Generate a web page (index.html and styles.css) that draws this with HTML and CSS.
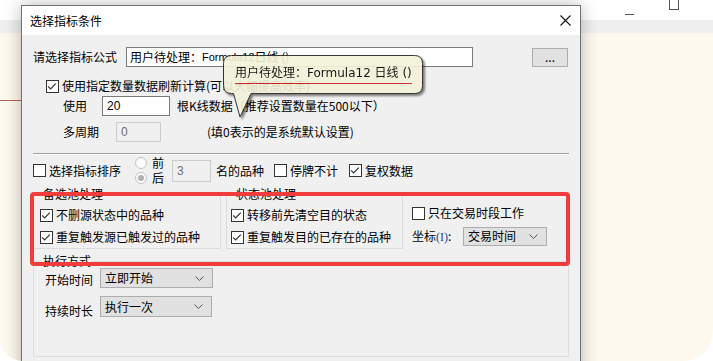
FILE: index.html
```html
<!DOCTYPE html>
<html lang="zh">
<head>
<meta charset="utf-8">
<title>选择指标条件</title>
<link rel="stylesheet" href="styles.css">
</head>
<body>
<div class="desk">
  <div class="bgwin">
    <div class="bg-title"><span class="bg-min"></span><span class="bg-max"></span></div>
    <div class="bg-tool"></div>
    <div class="bg-content"><div class="bg-line"></div></div>
  </div>

  <div class="dialog">
    <div class="titlebar">
      <span class="title">选择指标条件</span>
      <svg class="close" width="11" height="11" viewBox="0 0 11 11"><path d="M0.5 0.5 L10.5 10.5 M10.5 0.5 L0.5 10.5" stroke="#111" stroke-width="1.1" fill="none"/></svg>
    </div>
    <div class="body">
      <div class="row r-formula">
        <span class="lbl w93">请选择指标公式</span>
        <div class="input formula">用户待处理：<span class="lat">Formula12</span> 日线 ()</div>
        <div class="btn">...</div>
      </div>

      <div class="row r-check">
        <span class="cb on"><svg viewBox="0 0 13 13"><path d="M2.3 6.3 L5 9 L10.6 3.4"/></svg></span>
        <span class="cbl">使用指定数量数据刷新计算(可以大幅提高效率)</span>
      </div>

      <div class="row r-use">
        <span class="lbl w39">使用</span>
        <div class="input num w68">20</div>
        <span class="after7">根K线数据（推荐设置数量在500以下）</span>
      </div>

      <div class="row r-multi">
        <span class="lbl w53">多周期</span>
        <div class="input num dis w45">0</div>
        <span class="after46">(填0表示的是系统默认设置)</span>
      </div>

      <div class="sep"></div>

      <div class="row r-sort">
        <span class="cb"></span>
        <span class="cbl">选择指标排序</span>
        <div class="radios">
          <div class="radio-row"><span class="rd"></span><span class="rl">前</span></div>
          <div class="radio-row"><span class="rd sel"></span><span class="rl">后</span></div>
        </div>
        <div class="input num dis w39 h22">3</div>
        <span class="ml5">名的品种</span>
        <span class="cb ml10"></span>
        <span class="cbl">停牌不计</span>
        <span class="cb on ml11"><svg viewBox="0 0 13 13"><path d="M2.3 6.3 L5 9 L10.6 3.4"/></svg></span>
        <span class="cbl">复权数据</span>
      </div>

      <div class="groups">
        <fieldset class="grp g1">
          <legend>备选池处理</legend>
          <div class="row grow first">
            <span class="cb on"><svg viewBox="0 0 13 13"><path d="M2.3 6.3 L5 9 L10.6 3.4"/></svg></span>
            <span class="cbl">不删源状态中的品种</span>
          </div>
          <div class="row grow">
            <span class="cb on"><svg viewBox="0 0 13 13"><path d="M2.3 6.3 L5 9 L10.6 3.4"/></svg></span>
            <span class="cbl">重复触发源已触发过的品种</span>
          </div>
        </fieldset>
        <fieldset class="grp g2">
          <legend>状态池处理</legend>
          <div class="row grow first">
            <span class="cb on"><svg viewBox="0 0 13 13"><path d="M2.3 6.3 L5 9 L10.6 3.4"/></svg></span>
            <span class="cbl">转移前先清空目的状态</span>
          </div>
          <div class="row grow">
            <span class="cb on"><svg viewBox="0 0 13 13"><path d="M2.3 6.3 L5 9 L10.6 3.4"/></svg></span>
            <span class="cbl">重复触发目的已存在的品种</span>
          </div>
        </fieldset>
        <div class="g3">
          <div class="row g3-top">
            <span class="cb"></span>
            <span class="cbl">只在交易时段工作</span>
          </div>
          <div class="row g3-bot">
            <span class="coord">坐标<span class="acc">(I)</span>:</span>
            <div class="combo w84">交易时间<svg class="chev" width="9" height="5" viewBox="0 0 9 5"><path d="M0.5 0.5 L4.5 4.5 L8.5 0.5"/></svg></div>
          </div>
        </div>
      </div>

      <fieldset class="grp exec">
        <legend>执行方式</legend>
        <div class="row erow first">
          <span class="lbl w55 lo">开始时间</span>
          <div class="combo w113">立即开始<svg class="chev" width="9" height="5" viewBox="0 0 9 5"><path d="M0.5 0.5 L4.5 4.5 L8.5 0.5"/></svg></div>
        </div>
        <div class="row erow second">
          <span class="lbl w55 lo2">持续时长</span>
          <div class="combo w112">执行一次<svg class="chev" width="9" height="5" viewBox="0 0 9 5"><path d="M0.5 0.5 L4.5 4.5 L8.5 0.5"/></svg></div>
        </div>
      </fieldset>
    </div>
  </div>

  <div class="hl"></div>

  <div class="tip">
    <svg class="tip-bg" width="206" height="68" viewBox="0 0 206 68">
      <path d="M8.5 0.5 H191.5 Q199.5 0.5 199.5 8.5 V30.5 Q199.5 38.5 191.5 38.5 H28 L17 62 L10.5 38.5 H8.5 Q0.5 38.5 0.5 30.5 V8.5 Q0.5 0.5 8.5 0.5 Z" fill="#f3f2d9" stroke="#222" stroke-width="1"/>
    </svg>
    <div class="tip-text">用户待处理：Formula12 日线 ()</div>
    <div class="tip-line"></div>
  </div>
</div>
</body>
</html>
```

FILE: styles.css
```css
* { box-sizing: border-box; }
html, body { margin: 0; padding: 0; }
body {
  background: #fff;
  font-family: "Noto Sans CJK SC", sans-serif;
  font-size: 12px;
  color: #000;
}
.desk {
  position: relative;
  width: 713px;
  height: 361px;
  overflow: hidden;
  border-radius: 0 0 30px 22px;
}
.bgwin {
  height: 100%;
  background: #fef9ee;
  display: flex;
  flex-direction: column;
}
.bg-title {
  height: 20px;
  background: #fff;
  display: flex;
  justify-content: flex-end;
  align-items: flex-start;
}
.bg-min {
  width: 9px;
  height: 1px;
  background: #555;
  margin-top: 14px;
  margin-right: 35px;
}
.bg-max {
  width: 10px;
  height: 10px;
  border: 1px solid #555;
  border-top: none;
  margin-right: 34px;
}
.bg-tool { height: 13px; background: #efefef; }
.bg-content { flex: 1; }
.bg-line { margin-top: 67px; height: 1px; width: 40px; background: #b36060; }

/* dialog */
.dialog {
  position: absolute;
  left: 21px;
  top: 5px;
  width: 560px;
  height: 380px;
  border: 1px solid #707070;
  background: #f0f0f0;
  box-shadow: 0 0 16px rgba(0, 0, 0, 0.28);
}
.titlebar {
  height: 29px;
  background: #fff;
  display: flex;
  align-items: center;
  justify-content: space-between;
  padding: 0 9px 0 8px;
}
.title { line-height: 14px; }
.body { padding: 12px 0 0 11px; }
.row { display: flex; align-items: center; }
.lbl { line-height: 14px; flex: none; }
.w93 { width: 93px; }
.w39 { width: 39px; }
.w53 { width: 53px; }
.w55 { width: 55px; }

.input {
  height: 20px;
  background: #fff;
  border: 1px solid #7a7a7a;
  display: flex;
  align-items: center;
  padding-left: 3px;
  line-height: 14px;
  white-space: nowrap;
  overflow: hidden;
}
.input.formula { width: 347px; }
.lat { font-family: "Liberation Sans", sans-serif; font-size: 11px; }
.num { font-family: "Liberation Sans", sans-serif; font-size: 12px; padding-left: 4px; }
.dis { background: #f0f0f0; border-color: #cccccc; color: #6d6d6d; }
.w68 { width: 68px; }
.w45 { width: 45px; }
.w39.input { width: 39px; }
.h22 { height: 22px; margin-left: 8px; }
.btn {
  margin-left: 59px;
  width: 36px;
  height: 19px;
  margin-top: 1px;
  background: #e1e1e1;
  border: 1px solid #adadad;
  display: flex;
  align-items: center;
  justify-content: center;
  line-height: 12px;
  padding-bottom: 2px;
}

.r-check { margin-top: 10px; height: 18px; padding-left: 13px; }
.r-use { margin-top: 1px; height: 20px; padding-left: 30px; }
.r-multi { margin-top: 6px; height: 20px; padding-left: 30px; }
.after7 { margin-left: 7px; line-height: 14px; white-space: nowrap; }
.after46 { margin-left: 46px; line-height: 14px; white-space: nowrap; }

.cb {
  flex: none;
  width: 13px;
  height: 13px;
  border: 1px solid #333;
  background: #fff;
  display: inline-flex;
}
.cb svg { margin: -1px 0 0 -1px; width: 13px; height: 13px; }
.cb svg path { fill: none; stroke: #333; stroke-width: 1.3; }
.cbl { margin-left: 3px; line-height: 14px; white-space: nowrap; }
.ml5 { margin-left: 5px; line-height: 14px; }
.ml10 { margin-left: 10px; }
.ml11 { margin-left: 11px; }

.sep {
  margin-top: 11px;
  width: 536px;
  border-top: 1px solid #a0a0a0;
  border-bottom: 1px solid #fff;
}
.r-sort { margin-top: 2px; height: 27px; }
.radios {
  margin-left: 14px;
  height: 27px;
  display: flex;
  flex-direction: column;
  justify-content: space-between;
}
.radio-row { display: flex; align-items: center; height: 12px; }
.rl { margin-left: 5px; line-height: 12px; height: 12px; overflow: visible; }
.rd {
  width: 12px;
  height: 12px;
  border-radius: 50%;
  border: 1px solid #c4c4c4;
  background: #fbfbfb;
  display: flex;
  align-items: center;
  justify-content: center;
}
.rd.sel::after {
  content: "";
  width: 6px;
  height: 6px;
  border-radius: 50%;
  background: #b0b0b0;
}

/* groups */
.groups { display: flex; margin-top: 3px; align-items: flex-start; }
.grp {
  margin: 0;
  padding: 0;
  min-width: 0;
  border: 1px solid #dcdcdc;
}
.grp legend {
  padding: 0 1px;
  margin-left: 8px;
  line-height: 14px;
}
.g1 { width: 188px; height: 62px; }
.g1 .row { padding-left: 6px; }
.g2 { width: 177px; height: 62px; margin-left: 5px; }
.g2 .row { padding-left: 4px; }
.grow { height: 18px; margin-top: 4px; }
.grow.first { margin-top: 5px; }
.g3 { padding-left: 9px; }
.g3-top { height: 18px; margin-top: 17px; }
.g3-bot { height: 20px; margin-top: 4px; }
.coord { width: 51px; line-height: 14px; }
.acc { font-family: "Liberation Serif", serif; color: #1d3f9a; font-size: 12px; }

.combo {
  height: 20px;
  background: #e1e1e1;
  border: 1px solid #adadad;
  display: flex;
  align-items: center;
  justify-content: space-between;
  padding: 0 8px 0 4px;
  line-height: 14px;
}
.w84 { width: 84px; height: 19px; }
.w113 { width: 113px; }
.w112 { width: 112px; height: 21px; }
.chev path { fill: none; stroke: #555; stroke-width: 1; }

.exec { width: 536px; height: 103px; margin-top: 5px; }
.exec .row { padding-left: 11px; }
.erow { height: 20px; }
.erow.second { margin-top: 8px; height: 21px; }
.lo { margin-top: 3px; }
.lo2 { margin-top: 8px; }

/* highlight */
.hl {
  position: absolute;
  left: 30px;
  top: 192px;
  width: 540px;
  height: 74px;
  border: 4px solid #f23b3b;
  border-radius: 4px;
}

/* tooltip */
.tip {
  position: absolute;
  left: 223px;
  top: 55px;
  width: 206px;
  height: 68px;
  opacity: 0.9;
  padding: 11px 0 0 12px;
}
.tip-bg {
  position: absolute;
  left: 0;
  top: 0;
  filter: drop-shadow(2px 2px 1px rgba(0, 0, 0, 0.55));
}
.tip-text {
  position: relative;
  font-family: "DejaVu Sans", "Noto Sans CJK SC", sans-serif;
  font-size: 12px;
  line-height: 14px;
  white-space: nowrap;
}
.tip-line {
  position: relative;
  margin-top: 3px;
  width: 177px;
  height: 1px;
  background: #d01818;
}
```
